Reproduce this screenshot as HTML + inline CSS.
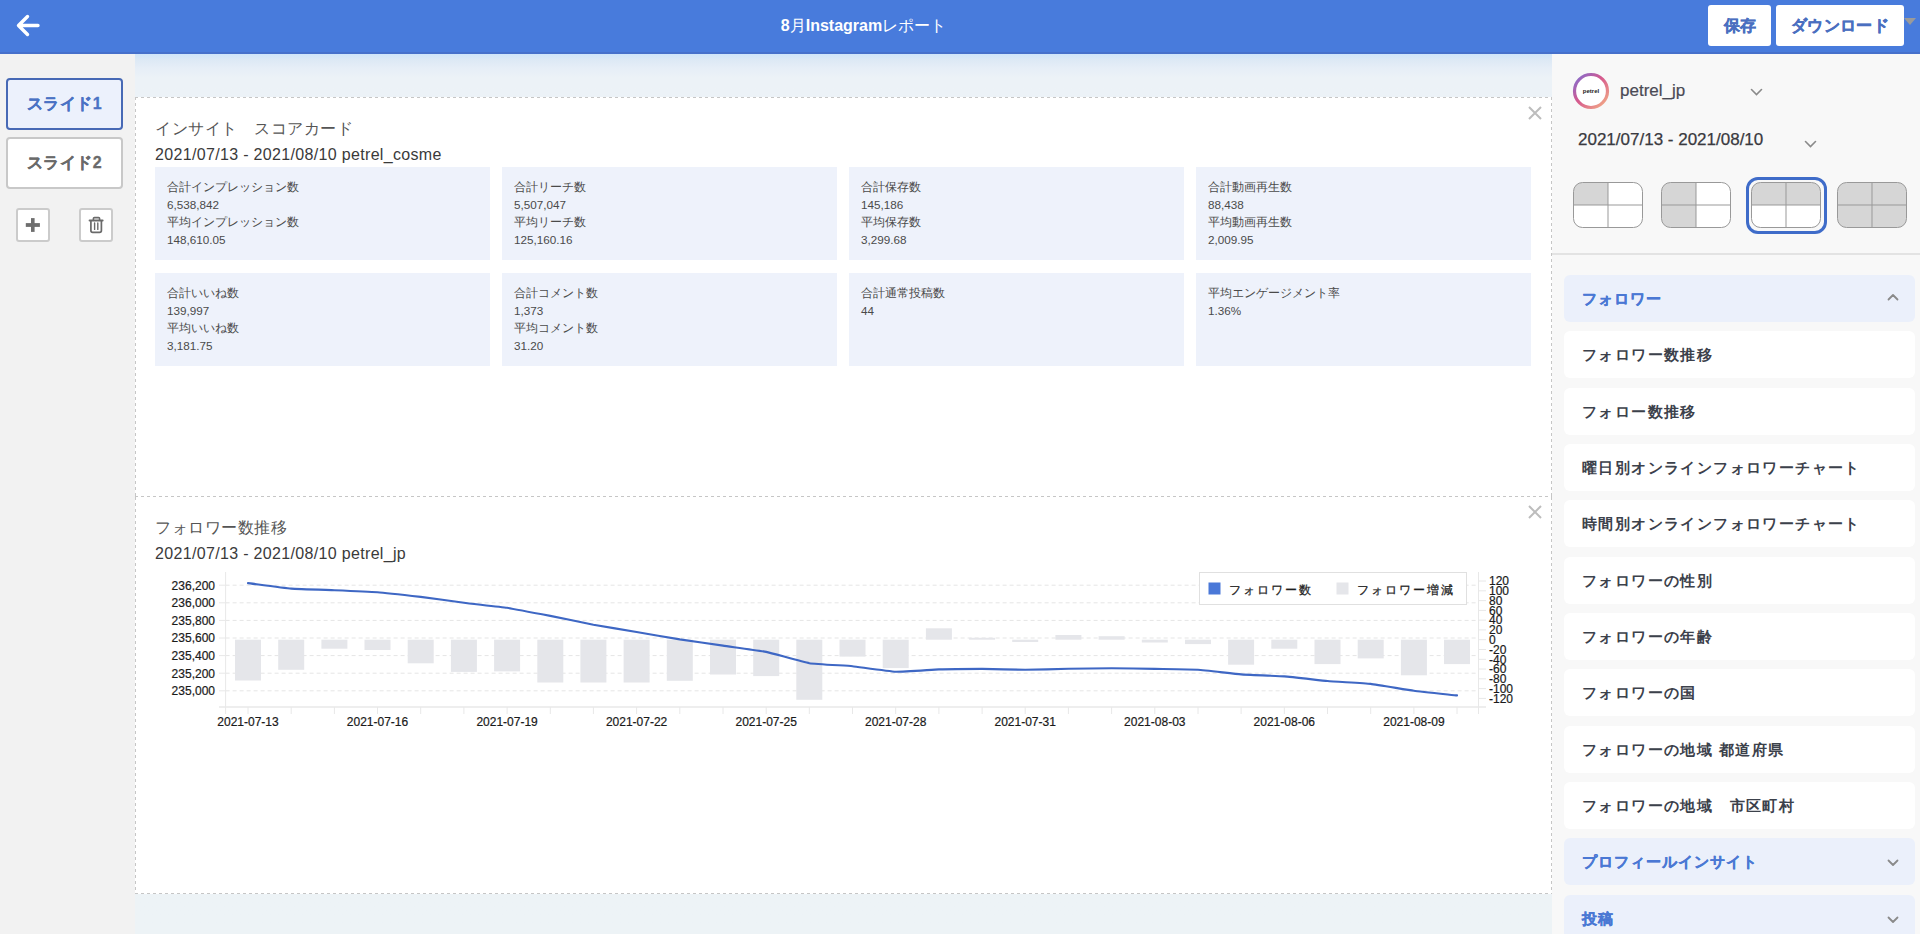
<!DOCTYPE html>
<html lang="ja"><head><meta charset="utf-8"><title>8月Instagramレポート</title>
<style>
html,body{margin:0;padding:0;width:1920px;height:934px;overflow:hidden;background:#f2f2f2;font-family:"Liberation Sans",sans-serif;}
#hdr{position:absolute;left:0;top:0;width:1920px;height:52px;background:#487bdc;border-bottom:2px solid #4670cb;z-index:5}
#title{position:absolute;left:1.5px;width:1724px;top:15px;text-align:center;color:#fff;font-size:16px;line-height:22px}
.hbtn{position:absolute;top:5px;height:41px;background:#fff;border-radius:3px;color:#4a6fc0;font-weight:bold;font-size:16px;line-height:41px;text-align:center;-webkit-text-stroke:0.4px #4a6fc0}
#left{position:absolute;left:0;top:53px;width:135px;height:881px;background:#f2f2f2}
.sbtn{position:absolute;left:6px;width:113px;height:48px;border-radius:4px;font-weight:bold;font-size:16px;line-height:48px;text-align:center;letter-spacing:0.4px}
.ibtn{position:absolute;width:30px;height:30px;border:2px solid #cbcbcb;border-radius:3px;background:#fff}
#main{position:absolute;left:135px;top:54px;width:1417px;height:880px;background:linear-gradient(#cfe5fa 0px,#dde9f5 6px,#e6eef7 14px,#ecf2f7 24px,#edf3f6 100%)}
.slide{position:absolute;left:135px;width:1417px;background-color:#fff;background-image:linear-gradient(to right,#c6c6c6 50%,transparent 50%),linear-gradient(to right,#c6c6c6 50%,transparent 50%),linear-gradient(to bottom,#c6c6c6 50%,transparent 50%),linear-gradient(to bottom,#c6c6c6 50%,transparent 50%);background-size:6px 1px,6px 1px,1px 6px,1px 6px;background-position:0 0,0 100%,0 0,100% 0;background-repeat:repeat-x,repeat-x,repeat-y,repeat-y}
.s2{background-image:linear-gradient(to right,#c6c6c6 50%,transparent 50%),linear-gradient(to bottom,#c6c6c6 50%,transparent 50%),linear-gradient(to bottom,#c6c6c6 50%,transparent 50%);background-size:6px 1px,1px 6px,1px 6px;background-position:0 100%,0 0,100% 0;background-repeat:repeat-x,repeat-y,repeat-y}
.x{position:absolute;width:14px;height:14px}
.stitle{position:absolute;left:155px;font-size:16px;color:#555;letter-spacing:0.5px;line-height:20px}
.sdate{position:absolute;left:155px;font-size:16px;color:#3a3a3a;line-height:20px;letter-spacing:0.33px}
.card{position:absolute;width:311px;height:79px;padding:11px 12px 3px 12px;background:#eef2fb;font-size:11.7px;line-height:17.6px;color:#4a4a4a}
#right{position:absolute;left:1552px;top:53px;width:368px;height:881px;background:#f8f8f8}
.acc{position:absolute;left:1564px;width:351px;height:47px;border-radius:6px;font-weight:bold;font-size:15px;line-height:47px;letter-spacing:1px}
.acc span{position:absolute;left:18px;top:0}
.acc .chev{position:absolute;left:323px;top:21px}
.hd0 .chev{top:17.5px}
.hd{background:#ebf0fb;color:#4a78d4;-webkit-text-stroke:0.35px #4a78d4}
.it{background:#fff;color:#3c414b;letter-spacing:1.4px}
svg text{font-family:"Liberation Sans",sans-serif}
</style></head>
<body>
<div id="hdr">
 <svg style="position:absolute;left:15px;top:13px" width="26" height="25" viewBox="0 0 26 25"><path d="M23 12.5 H4 M12.5 3.5 L3.5 12.5 L12.5 21.5" fill="none" stroke="#fff" stroke-width="3.4" stroke-linecap="round" stroke-linejoin="round"/></svg>
 <div id="title"><b>8</b>月<b>Instagram</b>レポート</div>
 <div class="hbtn" style="left:1708px;width:63px">保存</div>
 <div class="hbtn" style="left:1776px;width:128px;letter-spacing:0.4px">ダウンロード</div>
 <svg style="position:absolute;left:1904px;top:18px" width="12" height="8" viewBox="0 0 12 8"><path d="M0 0 H12 L6 7 Z" fill="#9a9a9a"/></svg>
</div>
<div id="left">
 <div class="sbtn" style="top:25px;height:48px;border:2px solid #4769b5;background:#ecf1fc;color:#4a72c4;-webkit-text-stroke:0.3px #4a72c4">スライド1</div>
 <div class="sbtn" style="top:84px;height:47.5px;border:2px solid #c8c8c8;background:#fff;color:#6a6a6a;-webkit-text-stroke:0.3px #6a6a6a">スライド2</div>
 <div class="ibtn" style="left:16px;top:155px"></div>
 <div class="ibtn" style="left:79px;top:155px"></div>
</div>
<div id="main"></div>
<svg style="position:absolute;left:0;top:200px" width="130" height="50" viewBox="0 200 130 50">
<g fill="#6e6e6e"><rect x="25.8" y="223.1" width="14.1" height="3.8"/><rect x="31" y="218.1" width="3.6" height="13.8"/></g>
<g fill="none" stroke="#6a6a6a" stroke-linecap="round" stroke-linejoin="round">
<path d="M89.6 220.6 H102.6" stroke-width="2"/>
<path d="M93.4 220.3 V218.6 Q93.4 217.6 94.4 217.6 H98.6 Q99.6 217.6 99.6 218.6 V220.3" stroke-width="1.6"/>
<path d="M90.9 221 V230.6 Q90.9 232.4 92.7 232.4 H99.6 Q101.4 232.4 101.4 230.6 V221" stroke-width="1.7"/>
<path d="M94.6 223 V229.4 M97.8 223 V229.4" stroke-width="1.4"/>
</g></svg>

<div class="slide" style="top:97px;height:400px"></div>
<div class="slide s2" style="top:497px;height:397px"></div>
<svg class="x" style="left:1528px;top:106px" viewBox="0 0 14 14"><path d="M1 1 L13 13 M13 1 L1 13" stroke="#bdbdbd" stroke-width="2"/></svg>
<svg class="x" style="left:1528px;top:505px" viewBox="0 0 14 14"><path d="M1 1 L13 13 M13 1 L1 13" stroke="#bdbdbd" stroke-width="2"/></svg>
<div class="stitle" style="top:118.5px">インサイト　スコアカード</div>
<div class="sdate" style="top:145px">2021/07/13 - 2021/08/10 petrel_cosme</div>
<div class="card" style="left:155px;top:167px"><div>合計インプレッション数</div><div>6,538,842</div><div>平均インプレッション数</div><div>148,610.05</div></div>
<div class="card" style="left:502px;top:167px"><div>合計リーチ数</div><div>5,507,047</div><div>平均リーチ数</div><div>125,160.16</div></div>
<div class="card" style="left:849px;top:167px"><div>合計保存数</div><div>145,186</div><div>平均保存数</div><div>3,299.68</div></div>
<div class="card" style="left:1196px;top:167px"><div>合計動画再生数</div><div>88,438</div><div>平均動画再生数</div><div>2,009.95</div></div>
<div class="card" style="left:155px;top:273px"><div>合計いいね数</div><div>139,997</div><div>平均いいね数</div><div>3,181.75</div></div>
<div class="card" style="left:502px;top:273px"><div>合計コメント数</div><div>1,373</div><div>平均コメント数</div><div>31.20</div></div>
<div class="card" style="left:849px;top:273px"><div>合計通常投稿数</div><div>44</div></div>
<div class="card" style="left:1196px;top:273px"><div>平均エンゲージメント率</div><div>1.36%</div></div>

<div class="stitle" style="top:518px">フォロワー数推移</div>
<div class="sdate" style="top:544px">2021/07/13 - 2021/08/10 petrel_jp</div>
<svg style="position:absolute;left:0;top:0" width="1920" height="934" viewBox="0 0 1920 934">
<line x1="225.6" y1="585.2" x2="1478.5" y2="585.2" stroke="#e5e5e5" stroke-width="1" stroke-dasharray="4,3"/>
<line x1="225.6" y1="602.8" x2="1478.5" y2="602.8" stroke="#e5e5e5" stroke-width="1" stroke-dasharray="4,3"/>
<line x1="225.6" y1="620.4" x2="1478.5" y2="620.4" stroke="#e5e5e5" stroke-width="1" stroke-dasharray="4,3"/>
<line x1="225.6" y1="638.0" x2="1478.5" y2="638.0" stroke="#e5e5e5" stroke-width="1" stroke-dasharray="4,3"/>
<line x1="225.6" y1="655.6" x2="1478.5" y2="655.6" stroke="#e5e5e5" stroke-width="1" stroke-dasharray="4,3"/>
<line x1="225.6" y1="673.2" x2="1478.5" y2="673.2" stroke="#e5e5e5" stroke-width="1" stroke-dasharray="4,3"/>
<line x1="225.6" y1="690.8" x2="1478.5" y2="690.8" stroke="#e5e5e5" stroke-width="1" stroke-dasharray="4,3"/>
<g stroke="#e8e8e8" stroke-width="1"><line x1="219" y1="585.2" x2="225.6" y2="585.2"/><line x1="219" y1="602.8" x2="225.6" y2="602.8"/><line x1="219" y1="620.4" x2="225.6" y2="620.4"/><line x1="219" y1="638.0" x2="225.6" y2="638.0"/><line x1="219" y1="655.6" x2="225.6" y2="655.6"/><line x1="219" y1="673.2" x2="225.6" y2="673.2"/><line x1="219" y1="690.8" x2="225.6" y2="690.8"/></g>
<g fill="#e5e6ea"><rect x="235.0" y="639.7" width="26" height="40.8"/><rect x="278.2" y="639.7" width="26" height="30.1"/><rect x="321.4" y="639.7" width="26" height="9.0"/><rect x="364.5" y="639.7" width="26" height="10.3"/><rect x="407.7" y="639.7" width="26" height="23.6"/><rect x="450.9" y="639.7" width="26" height="32.2"/><rect x="494.1" y="639.7" width="26" height="31.7"/><rect x="537.3" y="639.7" width="26" height="42.8"/><rect x="580.4" y="639.7" width="26" height="42.8"/><rect x="623.6" y="639.7" width="26" height="42.8"/><rect x="666.8" y="639.7" width="26" height="41.1"/><rect x="710.0" y="639.7" width="26" height="34.8"/><rect x="753.2" y="639.7" width="26" height="36.4"/><rect x="796.3" y="639.7" width="26" height="60.1"/><rect x="839.5" y="639.7" width="26" height="16.9"/><rect x="882.7" y="639.7" width="26" height="28.4"/><rect x="925.9" y="628.3" width="26" height="11.4"/><rect x="969.1" y="637.8" width="26" height="1.9"/><rect x="1012.2" y="639.7" width="26" height="2.3"/><rect x="1055.4" y="635.0" width="26" height="4.7"/><rect x="1098.6" y="636.2" width="26" height="3.5"/><rect x="1141.8" y="639.7" width="26" height="2.8"/><rect x="1185.0" y="639.7" width="26" height="4.4"/><rect x="1228.1" y="639.7" width="26" height="25.0"/><rect x="1271.3" y="639.7" width="26" height="9.0"/><rect x="1314.5" y="639.7" width="26" height="24.4"/><rect x="1357.7" y="639.7" width="26" height="18.7"/><rect x="1400.9" y="639.7" width="26" height="35.6"/><rect x="1444.0" y="639.7" width="26" height="24.4"/></g>
<line x1="225.6" y1="572" x2="225.6" y2="714" stroke="#e8e8e8" stroke-width="1"/>
<line x1="1478.5" y1="572" x2="1478.5" y2="714" stroke="#e8e8e8" stroke-width="1"/>
<line x1="219" y1="707" x2="1486" y2="707" stroke="#e8e8e8" stroke-width="1.5"/>
<g stroke="#e8e8e8" stroke-width="1"><line x1="248.0" y1="707" x2="248.0" y2="714"/><line x1="291.2" y1="707" x2="291.2" y2="714"/><line x1="334.4" y1="707" x2="334.4" y2="714"/><line x1="377.5" y1="707" x2="377.5" y2="714"/><line x1="420.7" y1="707" x2="420.7" y2="714"/><line x1="463.9" y1="707" x2="463.9" y2="714"/><line x1="507.1" y1="707" x2="507.1" y2="714"/><line x1="550.3" y1="707" x2="550.3" y2="714"/><line x1="593.4" y1="707" x2="593.4" y2="714"/><line x1="636.6" y1="707" x2="636.6" y2="714"/><line x1="679.8" y1="707" x2="679.8" y2="714"/><line x1="723.0" y1="707" x2="723.0" y2="714"/><line x1="766.2" y1="707" x2="766.2" y2="714"/><line x1="809.3" y1="707" x2="809.3" y2="714"/><line x1="852.5" y1="707" x2="852.5" y2="714"/><line x1="895.7" y1="707" x2="895.7" y2="714"/><line x1="938.9" y1="707" x2="938.9" y2="714"/><line x1="982.1" y1="707" x2="982.1" y2="714"/><line x1="1025.2" y1="707" x2="1025.2" y2="714"/><line x1="1068.4" y1="707" x2="1068.4" y2="714"/><line x1="1111.6" y1="707" x2="1111.6" y2="714"/><line x1="1154.8" y1="707" x2="1154.8" y2="714"/><line x1="1198.0" y1="707" x2="1198.0" y2="714"/><line x1="1241.1" y1="707" x2="1241.1" y2="714"/><line x1="1284.3" y1="707" x2="1284.3" y2="714"/><line x1="1327.5" y1="707" x2="1327.5" y2="714"/><line x1="1370.7" y1="707" x2="1370.7" y2="714"/><line x1="1413.9" y1="707" x2="1413.9" y2="714"/><line x1="1457.0" y1="707" x2="1457.0" y2="714"/></g>
<g stroke="#e8e8e8" stroke-width="1"><line x1="1486" y1="581.0" x2="1478.5" y2="581.0"/><line x1="1486" y1="590.8" x2="1478.5" y2="590.8"/><line x1="1486" y1="600.6" x2="1478.5" y2="600.6"/><line x1="1486" y1="610.4" x2="1478.5" y2="610.4"/><line x1="1486" y1="620.1" x2="1478.5" y2="620.1"/><line x1="1486" y1="629.9" x2="1478.5" y2="629.9"/><line x1="1486" y1="639.7" x2="1478.5" y2="639.7"/><line x1="1486" y1="649.5" x2="1478.5" y2="649.5"/><line x1="1486" y1="659.3" x2="1478.5" y2="659.3"/><line x1="1486" y1="669.0" x2="1478.5" y2="669.0"/><line x1="1486" y1="678.8" x2="1478.5" y2="678.8"/><line x1="1486" y1="688.6" x2="1478.5" y2="688.6"/><line x1="1486" y1="698.4" x2="1478.5" y2="698.4"/></g>
<path d="M248.0,583.1 C250.6,583.4 286.0,588.2 291.2,588.6 C296.4,589.0 329.2,590.0 334.4,590.2 C339.5,590.4 372.4,591.8 377.5,592.2 C382.7,592.6 415.5,596.3 420.7,596.9 C425.9,597.5 458.7,602.0 463.9,602.7 C469.1,603.4 501.9,607.0 507.1,607.8 C512.3,608.6 545.1,614.9 550.3,615.9 C555.4,616.9 588.3,623.7 593.4,624.7 C598.6,625.7 631.4,631.1 636.6,632.0 C641.8,632.9 674.6,638.6 679.8,639.4 C685.0,640.2 717.8,644.9 723.0,645.6 C728.2,646.4 761.0,650.8 766.2,651.9 C771.3,653.0 804.2,662.3 809.3,663.2 C814.5,664.1 847.3,665.7 852.5,666.2 C857.7,666.8 890.5,671.5 895.7,671.7 C900.9,671.9 933.7,669.6 938.9,669.4 C944.1,669.2 976.9,668.9 982.1,668.9 C987.2,668.9 1020.1,669.8 1025.2,669.8 C1030.4,669.8 1063.2,668.9 1068.4,668.8 C1073.6,668.7 1106.4,668.3 1111.6,668.3 C1116.8,668.3 1149.6,668.8 1154.8,668.9 C1160.0,669.0 1192.8,669.4 1198.0,669.7 C1203.1,670.0 1236.0,674.0 1241.1,674.4 C1246.3,674.8 1279.1,676.0 1284.3,676.4 C1289.5,676.8 1322.3,680.5 1327.5,681.0 C1332.7,681.5 1365.5,683.3 1370.7,683.9 C1375.9,684.5 1408.7,690.1 1413.9,690.8 C1419.0,691.5 1454.4,695.1 1457.0,695.4" fill="none" stroke="#3e67c4" stroke-width="2.1" stroke-linejoin="round" stroke-linecap="round"/>
<g font-size="12" fill="#1a1a1a" stroke="#1a1a1a" stroke-width="0.2" text-anchor="end"><text x="215" y="589.5">236,200</text><text x="215" y="607.1">236,000</text><text x="215" y="624.7">235,800</text><text x="215" y="642.3">235,600</text><text x="215" y="659.9">235,400</text><text x="215" y="677.5">235,200</text><text x="215" y="695.1">235,000</text></g>
<g font-size="12" fill="#1a1a1a" stroke="#1a1a1a" stroke-width="0.2"><text x="1489" y="585.3">120</text><text x="1489" y="595.1">100</text><text x="1489" y="604.9">80</text><text x="1489" y="614.7">60</text><text x="1489" y="624.4">40</text><text x="1489" y="634.2">20</text><text x="1489" y="644.0">0</text><text x="1489" y="653.8">-20</text><text x="1489" y="663.6">-40</text><text x="1489" y="673.3">-60</text><text x="1489" y="683.1">-80</text><text x="1489" y="692.9">-100</text><text x="1489" y="702.7">-120</text></g>
<g font-size="12" fill="#1a1a1a" stroke="#1a1a1a" stroke-width="0.2" text-anchor="middle"><text x="248.0" y="725.8">2021-07-13</text><text x="377.5" y="725.8">2021-07-16</text><text x="507.1" y="725.8">2021-07-19</text><text x="636.6" y="725.8">2021-07-22</text><text x="766.2" y="725.8">2021-07-25</text><text x="895.7" y="725.8">2021-07-28</text><text x="1025.2" y="725.8">2021-07-31</text><text x="1154.8" y="725.8">2021-08-03</text><text x="1284.3" y="725.8">2021-08-06</text><text x="1413.9" y="725.8">2021-08-09</text></g>
<rect x="1199.5" y="572.5" width="267" height="32" fill="#fff" stroke="#e0e0e0" stroke-width="1"/>
<rect x="1208.5" y="582.5" width="12" height="12" fill="#4a78d8"/>
<rect x="1336.5" y="582.5" width="12" height="12" fill="#e5e6ea"/>
<g font-size="12" fill="#1e1e1e" stroke="#1e1e1e" stroke-width="0.25" letter-spacing="2"><text x="1229" y="593.5">フォロワー数</text><text x="1357" y="593.5">フォロワー増減</text></g>
</svg>
<div id="right">
 <div style="position:absolute;left:0;top:200px;width:368px;height:2px;background:#e3e3e3"></div>
</div>
<svg style="position:absolute;left:1572px;top:72px" width="38" height="38" viewBox="0 0 38 38">
<defs><linearGradient id="ig" x1="0" y1="0" x2="1" y2="1"><stop offset="0" stop-color="#7b6fd6"/><stop offset="0.45" stop-color="#d5598e"/><stop offset="1" stop-color="#f5b185"/></linearGradient></defs>
<circle cx="19" cy="19" r="16.5" fill="#fff" stroke="url(#ig)" stroke-width="3.2"/>
<text x="19" y="20.6" font-size="6" font-weight="bold" text-anchor="middle" fill="#222">petrel</text>
</svg>
<div style="position:absolute;left:1620px;top:79.5px;font-size:17px;line-height:22px;color:#4a4a55;-webkit-text-stroke:0.2px #4a4a55">petrel_jp</div>
<svg style="position:absolute;left:1750px;top:88px" width="13" height="9" viewBox="0 0 13 9"><path d="M1.5 1.5 L6.5 6.5 L11.5 1.5" fill="none" stroke="#8a8a8a" stroke-width="1.6" stroke-linecap="round"/></svg>
<div style="position:absolute;left:1578px;top:128.5px;font-size:17px;line-height:22px;color:#3a3a40;-webkit-text-stroke:0.25px #3a3a40">2021/07/13 - 2021/08/10</div>
<svg style="position:absolute;left:1804px;top:140px" width="13" height="9" viewBox="0 0 13 9"><path d="M1.5 1.5 L6.5 6.5 L11.5 1.5" fill="none" stroke="#8a8a8a" stroke-width="1.6" stroke-linecap="round"/></svg>
<div style="position:absolute;left:1746px;top:177px;width:75px;height:51px;border:3px solid #3f6cc9;border-radius:12px"></div>
<svg style="position:absolute;left:1573px;top:182px" width="70" height="46" viewBox="-0.5 -0.5 70 46">
<defs><clipPath id="c1573"><rect x="0" y="0" width="69" height="45" rx="9"/></clipPath></defs>
<g clip-path="url(#c1573)"><rect x="0.0" y="0.0" width="34.5" height="22.5" fill="#d6d6d6"/><rect x="34.5" y="0.0" width="34.5" height="22.5" fill="#fff"/><rect x="0.0" y="22.5" width="34.5" height="22.5" fill="#fff"/><rect x="34.5" y="22.5" width="34.5" height="22.5" fill="#fff"/></g>
<line x1="34.5" y1="0" x2="34.5" y2="45" stroke="#999" stroke-width="1"/>
<line x1="0" y1="22.5" x2="69" y2="22.5" stroke="#999" stroke-width="1"/>
<rect x="0" y="0" width="69" height="45" rx="9" fill="none" stroke="#999" stroke-width="1"/>
</svg><svg style="position:absolute;left:1661px;top:182px" width="70" height="46" viewBox="-0.5 -0.5 70 46">
<defs><clipPath id="c1661"><rect x="0" y="0" width="69" height="45" rx="9"/></clipPath></defs>
<g clip-path="url(#c1661)"><rect x="0.0" y="0.0" width="34.5" height="22.5" fill="#d6d6d6"/><rect x="34.5" y="0.0" width="34.5" height="22.5" fill="#fff"/><rect x="0.0" y="22.5" width="34.5" height="22.5" fill="#d6d6d6"/><rect x="34.5" y="22.5" width="34.5" height="22.5" fill="#fff"/></g>
<line x1="34.5" y1="0" x2="34.5" y2="45" stroke="#999" stroke-width="1"/>
<line x1="0" y1="22.5" x2="69" y2="22.5" stroke="#999" stroke-width="1"/>
<rect x="0" y="0" width="69" height="45" rx="9" fill="none" stroke="#999" stroke-width="1"/>
</svg><svg style="position:absolute;left:1751px;top:182px" width="70" height="46" viewBox="-0.5 -0.5 70 46">
<defs><clipPath id="c1751"><rect x="0" y="0" width="69" height="45" rx="9"/></clipPath></defs>
<g clip-path="url(#c1751)"><rect x="0.0" y="0.0" width="34.5" height="22.5" fill="#d6d6d6"/><rect x="34.5" y="0.0" width="34.5" height="22.5" fill="#d6d6d6"/><rect x="0.0" y="22.5" width="34.5" height="22.5" fill="#fff"/><rect x="34.5" y="22.5" width="34.5" height="22.5" fill="#fff"/></g>
<line x1="34.5" y1="0" x2="34.5" y2="45" stroke="#999" stroke-width="1"/>
<line x1="0" y1="22.5" x2="69" y2="22.5" stroke="#999" stroke-width="1"/>
<rect x="0" y="0" width="69" height="45" rx="9" fill="none" stroke="#999" stroke-width="1"/>
</svg><svg style="position:absolute;left:1837px;top:182px" width="70" height="46" viewBox="-0.5 -0.5 70 46">
<defs><clipPath id="c1837"><rect x="0" y="0" width="69" height="45" rx="9"/></clipPath></defs>
<g clip-path="url(#c1837)"><rect x="0.0" y="0.0" width="34.5" height="22.5" fill="#d6d6d6"/><rect x="34.5" y="0.0" width="34.5" height="22.5" fill="#d6d6d6"/><rect x="0.0" y="22.5" width="34.5" height="22.5" fill="#d6d6d6"/><rect x="34.5" y="22.5" width="34.5" height="22.5" fill="#d6d6d6"/></g>
<line x1="34.5" y1="0" x2="34.5" y2="45" stroke="#999" stroke-width="1"/>
<line x1="0" y1="22.5" x2="69" y2="22.5" stroke="#999" stroke-width="1"/>
<rect x="0" y="0" width="69" height="45" rx="9" fill="none" stroke="#999" stroke-width="1"/>
</svg>
<div class="acc hd hd0" style="top:275.0px"><span>フォロワー</span><svg class="chev" width="12" height="8" viewBox="0 0 12 8"><path d="M1.5 6.5 L6 2 L10.5 6.5" fill="none" stroke="#8a8a8a" stroke-width="1.8" stroke-linecap="round" stroke-linejoin="round"/></svg></div>
<div class="acc it" style="top:331.3px"><span>フォロワー数推移</span></div>
<div class="acc it" style="top:387.7px"><span>フォロー数推移</span></div>
<div class="acc it" style="top:444.0px"><span>曜日別オンラインフォロワーチャート</span></div>
<div class="acc it" style="top:500.3px"><span>時間別オンラインフォロワーチャート</span></div>
<div class="acc it" style="top:556.6px"><span>フォロワーの性別</span></div>
<div class="acc it" style="top:613.0px"><span>フォロワーの年齢</span></div>
<div class="acc it" style="top:669.3px"><span>フォロワーの国</span></div>
<div class="acc it" style="top:725.6px"><span>フォロワーの地域 都道府県</span></div>
<div class="acc it" style="top:782.0px"><span>フォロワーの地域　市区町村</span></div>
<div class="acc hd" style="top:838.3px"><span>プロフィールインサイト</span><svg class="chev" width="12" height="8" viewBox="0 0 12 8"><path d="M1.5 1.5 L6 6 L10.5 1.5" fill="none" stroke="#8a8a8a" stroke-width="1.8" stroke-linecap="round" stroke-linejoin="round"/></svg></div>
<div class="acc hd" style="top:894.6px"><span>投稿</span><svg class="chev" width="12" height="8" viewBox="0 0 12 8"><path d="M1.5 1.5 L6 6 L10.5 1.5" fill="none" stroke="#8a8a8a" stroke-width="1.8" stroke-linecap="round" stroke-linejoin="round"/></svg></div>

</body></html>
